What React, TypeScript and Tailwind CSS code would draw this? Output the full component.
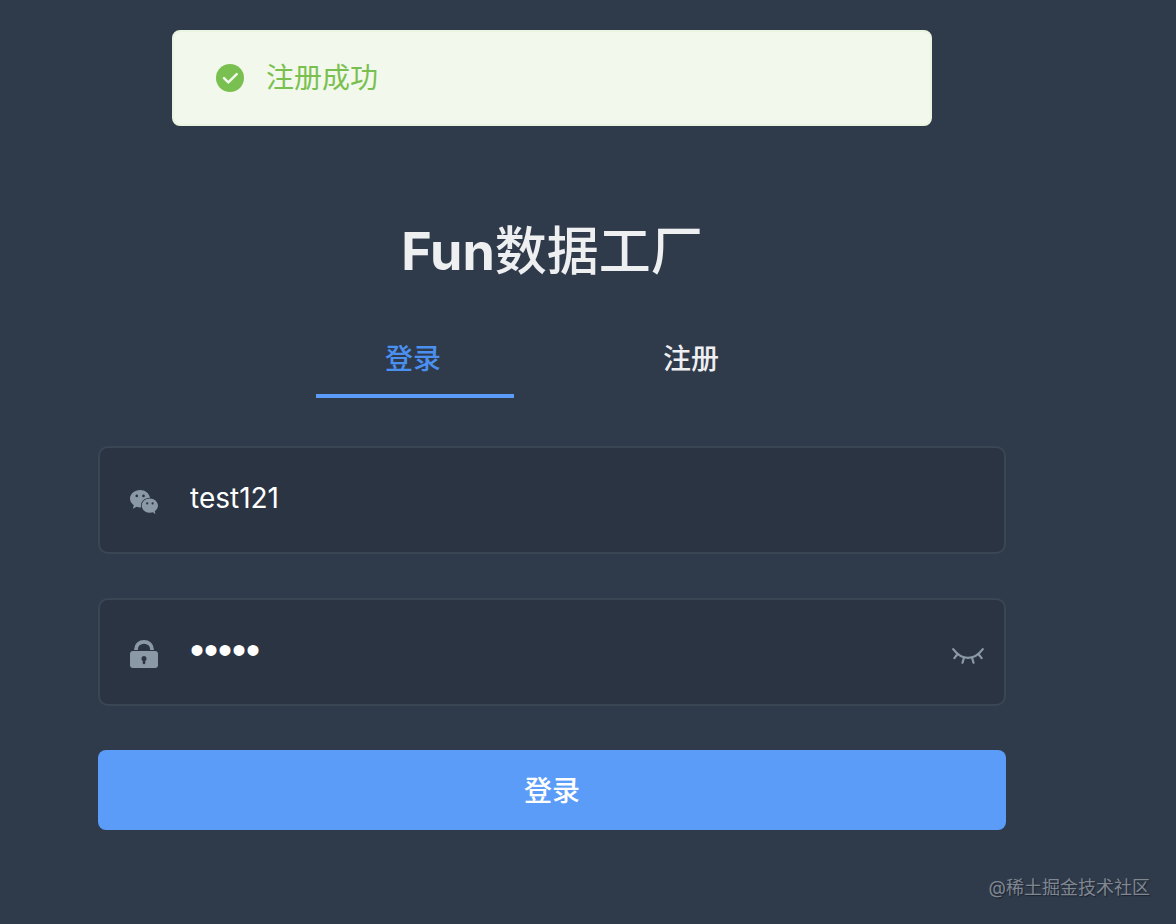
import React, { useState } from 'react';

const tabs = [
  { key: 'login', label: '登录' },
  { key: 'register', label: '注册' },
];

const SuccessIcon = () => (
  <svg viewBox="0 0 28 28" className="h-7 w-7 shrink-0" aria-hidden="true">
    <circle cx="14" cy="14" r="14" fill="#7ac050" />
    <path
      d="M8 14.200l4.300 4.200 8.400-8.200"
      fill="none"
      stroke="#f2f8ec"
      strokeWidth="2.500"
      strokeLinecap="round"
      strokeLinejoin="round"
    />
  </svg>
);

const WechatIcon = () => (
  <svg viewBox="0 0 28 24" className="h-6 w-7 shrink-0" aria-hidden="true">
    <path
      d="M10.2 0C4.600 0 0 3.800 0 8.600c0 2.700 1.500 5.100 3.800 6.700L2.800 18.800l3.900-2c1.200.4 2.200.6 3.500.6h.9a7.400 7.400 0 0 1-.2-1.700c0-4.300 4.100-7.900 8.700-7.900h.5C19.200 3.200 15.100 0 10.200 0z"
      fill="#8b98a5"
    />
    <path
      d="M28 15.600c0-4-3.900-7.200-8.100-7.200-4.600 0-8.200 3.200-8.200 7.200s3.600 7.200 8.200 7.200c1 0 1.900-.2 2.900-.5l2.700 1.700-.8-2.700c1.900-1.400 3.300-3.300 3.300-5.700z"
      fill="#8b98a5"
    />
    <circle cx="6.800" cy="5.900" r="1.300" fill="#2b3442" />
    <circle cx="13.500" cy="5.900" r="1.300" fill="#2b3442" />
    <circle cx="17.200" cy="13.400" r="1.100" fill="#2b3442" />
    <circle cx="22.600" cy="13.400" r="1.100" fill="#2b3442" />
  </svg>
);

const LockIcon = () => (
  <svg viewBox="0 0 28 28" className="h-7 w-7 shrink-0" aria-hidden="true">
    <path d="M6 10V9.200C6 4.800 9.600 1.900 14 1.900s8 2.900 8 7.300V10" fill="none" stroke="#8b98a5" strokeWidth="3.800" />
    <rect y="11" width="28" height="17" rx="3" fill="#8b98a5" />
    <path d="M14 16a2.700 2.700 0 0 0-1.300 5V23a1.300 1.300 0 0 0 2.600 0v-2a2.700 2.700 0 0 0-1.300-5z" fill="#2b3442" />
  </svg>
);

const EyeClosedIcon = () => (
  <svg
    viewBox="0 0 32 16"
    className="h-4 w-8"
    fill="none"
    stroke="#8b98a5"
    strokeWidth="2.200"
    strokeLinecap="round"
    aria-hidden="true"
  >
    <path d="M1.200 1.200c4 5.400 8.800 8.700 14.800 8.700s10.800-3.300 14.800-8.700" />
    <path d="M5.600 6L2.400 10.200M12 9.500l-1.500 5.300M20 9.500l1.500 5.300M26.400 6l3.200 4.200" />
  </svg>
);

const fieldBox = 'flex h-[108px] items-center rounded-[10px] border-2 border-[#3b4655] bg-[#2b3442] pr-5 pl-[30px]';
const fieldInput = 'mb-1 ml-8 h-16 min-w-0 flex-1 bg-transparent text-white outline-none';

export default function App() {
  const [activeTab, setActiveTab] = useState('login');
  const [username, setUsername] = useState('test121');
  const [password, setPassword] = useState('12345');
  const [showPwd, setShowPwd] = useState(false);

  return (
    <div className="min-h-screen bg-[#2f3a4a] pt-[30px] font-['Inter','Noto_Sans_CJK_SC',sans-serif]">
      <main className="mr-[170px] ml-[98px]">
        <div
          role="alert"
          className="mx-auto flex h-24 max-w-[760px] items-center gap-[22px] rounded-lg border-2 border-[#e9f5e0] bg-[#f2f8ec] px-[42px]"
        >
          <SuccessIcon />
          <p className="text-[28px] leading-10 text-[#7ac050]">注册成功</p>
        </div>

        <h1 className="mt-[94px] text-center text-[52px] leading-16 font-bold text-[#eeeff1]">
          Fun<span className="font-medium">数据工厂</span>
        </h1>

        <div className="mx-auto mt-[38px] max-w-[556px]">
          <div role="tablist" className="grid grid-cols-2">
            {tabs.map((tab) => (
              <button
                key={tab.key}
                type="button"
                role="tab"
                aria-selected={activeTab === tab.key}
                onClick={() => setActiveTab(tab.key)}
                className={`h-[72px] pt-0.5 text-[28px] font-medium ${activeTab === tab.key ? 'text-[#4a90f0]' : 'text-[#eeeff1]'}`}
              >
                {tab.label}
              </button>
            ))}
          </div>
          <div className="grid grid-cols-2">
            <div className={`ml-[42px] h-1 w-[198px] bg-[#5a9cf8] ${activeTab === 'login' ? '' : 'col-start-2'}`} />
          </div>
        </div>

        <form className="mt-12" onSubmit={(e) => e.preventDefault()}>
          <div className={fieldBox}>
            <label htmlFor="username" aria-label="username" className="mt-1">
              <WechatIcon />
            </label>
            <input
              id="username"
              name="username"
              value={username}
              onChange={(e) => setUsername(e.target.value)}
              className={`text-[28px] ${fieldInput}`}
            />
          </div>

          <div className={`mt-11 ${fieldBox}`}>
            <label htmlFor="password" aria-label="password" className="mt-1">
              <LockIcon />
            </label>
            <input
              id="password"
              name="password"
              type={showPwd ? 'text' : 'password'}
              value={password}
              onChange={(e) => setPassword(e.target.value)}
              className={`${showPwd ? 'text-[28px]' : "font-['Liberation_Sans',sans-serif] text-[40px]"} ${fieldInput}`}
            />
            <button type="button" aria-label="toggle password" className="mt-2" onClick={() => setShowPwd(!showPwd)}>
              <EyeClosedIcon />
            </button>
          </div>

          <button type="submit" className="mt-11 h-20 w-full rounded-lg bg-[#5a9cf8] pt-0.5 text-[28px] font-medium text-white">
            登录
          </button>
        </form>
      </main>

      <footer className="mt-11 pr-[26px] text-right text-lg leading-7 text-[#7f8792] [text-shadow:1px_1px_1px_#1c2430]">
        @稀土掘金技术社区
      </footer>
    </div>
  );
}
